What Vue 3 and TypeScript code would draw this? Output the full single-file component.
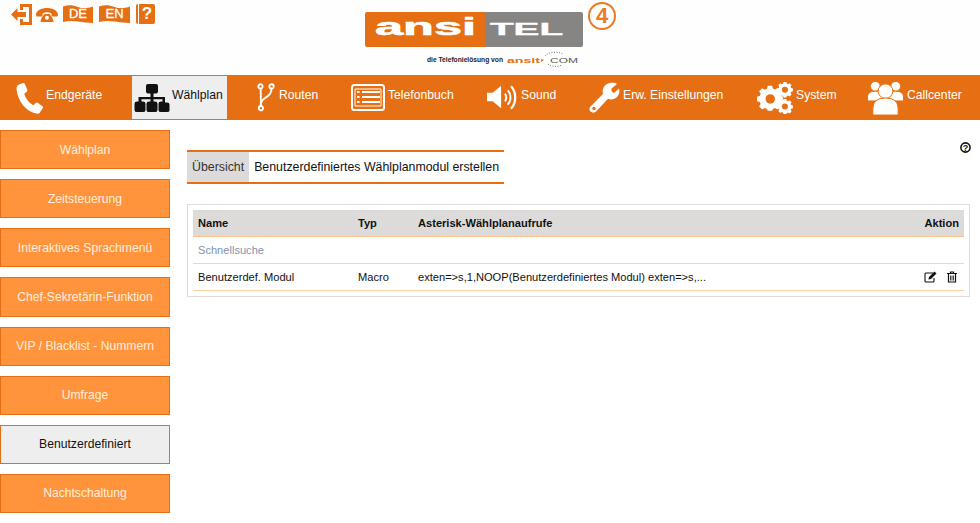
<template>
  <div class="page">
    <header class="top">
      <div class="quick">
        <!-- Abmelden -->
        <svg class="q-exit" width="21" height="21" viewBox="0 0 21 21">
          <path d="M9 0h12v21H9v-6h3v3h6V3h-6v3H9z" fill="#e66f14" />
          <path d="M0 10.500l6.500-6.500v4H15v5H6.500v4z" fill="#e66f14" />
        </svg>
        <!-- Telefon -->
        <svg class="q-phone" width="22" height="14" viewBox="0 0 22 14">
          <path d="M0 6C1 2 6 0 11 0s10 2 11 6c0 2-.5 2.500-1.500 2.500h-3.500c-1 0-1.500-.5-1.500-1.500V5.500C14 4.700 12.500 4.300 11 4.300s-3 .4-4.500 1.200V7c0 1-.5 1.500-1.500 1.500H1.500C.5 8.500 0 8 0 6z" fill="#e66f14" />
          <path d="M4.500 14c0-3 2-6 4-8h5c2 2 4 5 4 8z" fill="#e66f14" />
          <circle cx="11" cy="9.800" r="2" fill="#fff" />
        </svg>
        <span class="flag">
          <svg width="30" height="18" viewBox="0 0 33 19" preserveAspectRatio="none"><path d="M0 1.500c6-2 11-1.500 16.500.5S27 3.500 33 1.500V19c-6 0-11-.5-16.500-1.500S6 16.500 0 18z" fill="#e66f14" /></svg>
          <b>DE</b>
        </span>
        <span class="flag en">
          <svg width="31" height="18" viewBox="0 0 33 19" preserveAspectRatio="none"><path d="M0 1.500c6-2 11-1.500 16.500.5S27 3.500 33 1.500V19c-6 0-11-.5-16.500-1.500S6 16.500 0 18z" fill="#e66f14" /></svg>
          <b>EN</b>
        </span>
        <span class="help-book"><b>?</b></span>
      </div>
      <div class="brand">
        <svg width="218" height="56" viewBox="0 0 218 56">
          <path d="M2 0h118v35H2q-2 0-2-2V2q0-2 2-2z" fill="#e66f14" />
          <path d="M120 0h96q2 0 2 2v31q0 2-2 2h-96z" fill="#868584" />
          <text x="10" y="23" class="logo-a" textLength="101" lengthAdjust="spacingAndGlyphs">ansi</text>
          <text x="125" y="23" class="logo-t" textLength="73" lengthAdjust="spacingAndGlyphs">TEL</text>
          <text x="62" y="50" class="logo-s" textLength="76" lengthAdjust="spacingAndGlyphs">die Telefonielösung von</text>
          <text x="142" y="50.500" class="logo-c" textLength="33" lengthAdjust="spacingAndGlyphs">ansit</text>
          <text x="185" y="50.500" class="logo-g" textLength="28" lengthAdjust="spacingAndGlyphs">COM</text>
          <path d="M180 44c3-4 12-5 18-2M183 52c4 3 9 3 14 1" fill="none" stroke="#777" stroke-width="1" stroke-dasharray="1 1.500" />
          <path d="M176 47l3 1-3 2z" fill="#e66f14" />
        </svg>
        <div class="version">4</div>
      </div>
    </header>

    <nav class="nav">
      <a class="nav-item">
        <svg width="27" height="34" viewBox="0 0 28 34">
          <path d="M2 3.500 7 1.500c1-.4 1.800 0 2.200 1l2.500 6c.3.800 0 1.400-.6 2L8.500 12.500c1.500 5 5 9.500 9.500 12l2.400-2.300c.7-.6 1.400-.7 2.100-.3l4.700 3.300c.8.600 1 1.400.5 2.200l-2.700 4.300c-.8 1.200-2 1.800-3.500 1.500C10 31 2.500 21 .7 9c-.3-2.500 0-4.500 1.300-5.500z" fill="#fff" />
        </svg>
        <span>Endgeräte</span>
      </a>
      <a class="nav-item active">
        <svg width="36" height="30" viewBox="0 0 36 34" preserveAspectRatio="none">
          <path d="M14 1h8q2 0 2 2v7q0 2-2 2h-2.500v4H31v6h2q2.500 0 2.500 2.500v7Q35.500 33 33 33h-6q-2.500 0-2.500-2.500v-7q0-2.500 2.500-2.500h1.500v-2.500h-9V21h1.500q2.500 0 2.500 2.500v7Q23.500 33 21 33h-6q-2.500 0-2.500-2.500v-7Q12.500 21 15 21h1.500v-2.500h-9V21H9q2.500 0 2.500 2.500v7Q11.500 33 9 33H3q-2.500 0-2.500-2.500v-7Q.5 21 3 21h1.500v-5h12v-4H14q-2 0-2-2V3q0-2 2-2z" fill="#111" />
        </svg>
        <span>Wählplan</span>
      </a>
      <a class="nav-item">
        <svg width="20" height="29" viewBox="0 0 20 34" fill="none" stroke="#fff" stroke-width="2.200">
          <circle cx="3.500" cy="4" r="2.500" />
          <circle cx="16.500" cy="4" r="2.500" />
          <circle cx="4" cy="29.500" r="2.500" />
          <path d="M3.800 6.500 4 27M16.500 6.500c0 4-1 6-4 8.500-3.500 3-8 4-8.500 9" />
        </svg>
        <span>Routen</span>
      </a>
      <a class="nav-item">
        <svg width="34" height="27" viewBox="0 0 34 27">
          <rect x="1" y="1" width="32" height="25" rx="2.500" fill="#e66f14" stroke="#fff" stroke-width="2" />
          <path d="M6 8h2.500M6 13h2.500M6 18h2.500M11 8h18M11 13h18M11 18h18" stroke="#fff" stroke-width="2.200" />
          <path d="M4 5h26v17H4z" fill="none" stroke="#fff" stroke-width="1" />
        </svg>
        <span>Telefonbuch</span>
      </a>
      <a class="nav-item">
        <svg width="31" height="27" viewBox="0 0 33 28" fill="none" stroke="#fff">
          <path d="M0 9h6l9-7.500v24L6 18H0z" fill="#fff" stroke="none" />
          <path d="M19 10c2 2 2 6 0 8" stroke-width="2" />
          <path d="M22 6.500c4 4 4 11 0 15" stroke-width="2" />
          <path d="M25.500 2c6 6 6 18 0 24" stroke-width="2.400" />
        </svg>
        <span>Sound</span>
      </a>
      <a class="nav-item">
        <svg width="31" height="31" viewBox="0 0 31 31">
          <path d="M21 1c3-.6 5.500 0 7 1l-5.500 4.500c-.5 2 .5 4 2.500 4.500L30 6.500c1 3 .3 6-2 8.500-2.500 2.500-6 3-9 1.800L7 29.500c-1.500 1.500-4 1.500-5.500 0s-1.500-3.500 0-5L14 12c-1-3.500 0-6.500 2-8.500C17.500 2 19 1.300 21 1z" fill="#fff" />
          <circle cx="5" cy="26.500" r="1.700" fill="#e66f14" />
        </svg>
        <span>Erw. Einstellungen</span>
      </a>
      <a class="nav-item">
        <svg width="36" height="34" viewBox="0 0 38 34">
          <g fill="#fff">
            <path d="M12 7h5l.8 3.200 2.400 1 2.900-1.700 3.500 3.500-1.700 2.900 1 2.400 3.200.8v5l-3.200.8-1 2.400 1.700 2.900-3.500 3.500-2.900-1.700-2.400 1-.8 2h-5l-.8-2-2.400-1-2.900 1.700L2.400 30.400l1.700-2.900-1-2.400L0 24.300v-5l3.100-.8 1-2.400-1.700-2.900 3.500-3.500 2.900 1.700 2.400-1z" transform="translate(0 -2.500) scale(.94)" />
            <path d="M28 0h3l.4 1.800 1.400.6 1.600-1 2.100 2.100-1 1.600.6 1.400 1.800.4v3l-1.800.4-.6 1.400 1 1.600-2.100 2.100-1.600-1-1.400.6L31 16.500h-3l-.4-1.500-1.400-.6-1.600 1-2.100-2.100 1-1.600-.6-1.400-1.800-.4v-3l1.800-.4.6-1.400-1-1.600 2.100-2.100 1.600 1 1.400-.6z" />
            <path d="M28 18h3l.4 1.800 1.400.6 1.600-1 2.100 2.100-1 1.600.6 1.400 1.800.4v3l-1.800.4-.6 1.400 1 1.600-2.100 2.100-1.600-1-1.400.6L31 34h-3l-.4-1.500-1.400-.6-1.600 1-2.100-2.100 1-1.600-.6-1.400-1.800-.4v-3l1.800-.4.6-1.400-1-1.600 2.100-2.100 1.600 1 1.400-.6z" />
          </g>
          <circle cx="14" cy="18" r="5" fill="#e66f14" />
          <circle cx="29.500" cy="8.200" r="3.200" fill="#e66f14" />
          <circle cx="29.500" cy="26" r="3.200" fill="#e66f14" />
        </svg>
        <span>System</span>
      </a>
      <a class="nav-item">
        <svg width="37" height="36" viewBox="0 0 38 36">
          <g fill="#fff" stroke="#e66f14" stroke-width="1">
            <circle cx="8.500" cy="6" r="5" />
            <circle cx="29.500" cy="6" r="5" />
            <path d="M.5 21v-4q0-6 8-6t8 6v4z" />
            <path d="M21.500 21v-4q0-6 8-6t8 6v4z" />
            <circle cx="19" cy="11" r="7.500" />
            <path d="M6 35.500V29q0-11 13-11t13 11v6.500z" />
          </g>
        </svg>
        <span>Callcenter</span>
      </a>
    </nav>

    <div class="content">
      <aside class="side">
        <a v-for="item in sideItems" :key="item" class="side-btn" :class="{ current: item === 'Benutzerdefiniert' }">{{ item }}</a>
      </aside>
      <main class="main">
        <div class="help-line">
          <svg width="11" height="11" viewBox="0 0 11 11">
            <circle cx="5.500" cy="5.500" r="4.600" fill="none" stroke="#111" stroke-width="1.600" />
            <text x="5.500" y="8.600" class="help-q">?</text>
          </svg>
        </div>
        <div class="tabs">
          <span class="tab selected">Übersicht</span>
          <span class="tab">Benutzerdefiniertes Wählplanmodul erstellen</span>
        </div>
        <section class="panel">
          <div class="row head">
            <span>Name</span>
            <span>Typ</span>
            <span>Asterisk-Wählplanaufrufe</span>
            <span class="right">Aktion</span>
          </div>
          <div class="row search">Schnellsuche</div>
          <div class="row">
            <span>Benutzerdef. Modul</span>
            <span>Macro</span>
            <span>exten=&gt;s,1,NOOP(Benutzerdefiniertes Modul) exten=&gt;s,...</span>
            <span class="actions">
              <svg width="13" height="12" viewBox="0 0 13 12">
                <path d="M9 2H2q-1 0-1 1v7q0 1 1 1h7q1 0 1-1V7" fill="none" stroke="#111" stroke-width="1.100" />
                <path d="M10.500 .5l2 2L7 8l-2.600.6L5 6z" fill="#111" />
              </svg>
              <svg width="10" height="12" viewBox="0 0 10 12">
                <path d="M0 2.500h10M3.500 2.300V1h3v1.300" fill="none" stroke="#111" stroke-width="1.100" />
                <path d="M1.500 3v8h7V3" fill="none" stroke="#111" stroke-width="1.200" />
                <path d="M3.500 4.500V9.500M5 4.500V9.500M6.500 4.500V9.500" stroke="#111" stroke-width=".8" />
              </svg>
            </span>
          </div>
        </section>
      </main>
    </div>
  </div>
</template>

<script setup lang="ts">
/** Seitenmenü */
const sideItems: string[] = [
  'Wählplan',
  'Zeitsteuerung',
  'Interaktives Sprachmenü',
  'Chef-Sekretärin-Funktion',
  'VIP / Blacklist - Nummern',
  'Umfrage',
  'Benutzerdefiniert',
  'Nachtschaltung'
]
</script>

<style>
html,
body {
  margin: 0;
  background: #fff;
  overflow: hidden;
}
</style>

<style scoped>
.page {
  width: 980px;
  height: 523px;
  overflow: hidden;
  font-family: 'Liberation Sans', Arial, sans-serif;
  color: #111;
}

.top {
  height: 75px;
  display: flex;
  background: #fefefe;
}

.quick {
  width: 365px;
  height: 28px;
  padding: 4px 0 0 11px;
  box-sizing: border-box;
  display: flex;
  align-items: flex-start;
}

.q-phone {
  margin: 4px 0 0 4px;
}

.flag {
  position: relative;
  width: 30px;
  height: 18px;
  margin: 1px 0 0 5px;
}

.flag.en {
  width: 31px;
  margin-left: 6px;
}

.flag svg {
  display: block;
}

.flag b {
  position: absolute;
  inset: 0;
  text-align: center;
  font-size: 13px;
  font-weight: 400;
  line-height: 18px;
  color: #fff;
  -webkit-text-stroke: 0.3px #fff;
}

.help-book {
  width: 19px;
  height: 20px;
  margin-left: 6px;
  box-sizing: border-box;
  border-left: 2px solid #e66f14;
  padding-left: 1px;
  background: linear-gradient(#e66f14, #e66f14) content-box;
  border-radius: 2px;
  color: #fff;
  text-align: center;
  font-size: 17px;
  line-height: 20px;
}

.brand {
  display: flex;
  align-items: flex-start;
  padding-top: 12px;
  position: relative;
}

.brand svg {
  display: block;
}

.logo-a {
  font-size: 23px;
  font-weight: 700;
  fill: #fff;
  stroke: #fff;
  stroke-width: 0.6px;
}

.logo-t {
  font-size: 17px;
  font-weight: 700;
  fill: #fff;
  stroke: #fff;
  stroke-width: 0.4px;
}

.logo-s {
  font-size: 7px;
  font-weight: 700;
  fill: #222;
}

.logo-c {
  font-size: 8px;
  font-weight: 700;
  fill: #e66f14;
}

.logo-g {
  font-size: 7px;
  fill: #555;
}

.version {
  position: absolute;
  left: 223px;
  top: 2px;
  width: 28px;
  height: 28px;
  box-sizing: border-box;
  border: 2px solid #ea7a25;
  border-radius: 50%;
  color: #ea7a25;
  font-size: 22px;
  font-weight: 700;
  line-height: 24px;
  text-align: center;
}

.nav {
  height: 45px;
  background: #e66f14;
  display: grid;
  grid-template-columns: 118px 122px 95px 136px 102px 168px 110px auto;
  padding-left: 16px;
  box-sizing: border-box;
  align-items: center;
}

.nav-item {
  display: flex;
  align-items: center;
  gap: 3px;
  color: #fff;
  font-size: 12.200px;
  height: 45px;
  justify-self: start;
}

.nav-item span {
  padding-bottom: 6px;
}

.nav-item.active {
  margin-left: -2px;
  height: 43px;
  padding: 0 4px 0 2px;
  gap: 2px;
  background: #eee;
  color: #111;
}

.content {
  display: flex;
  padding-top: 10px;
}

.side {
  width: 170px;
  display: flex;
  flex-direction: column;
  gap: 10px;
  flex-shrink: 0;
}

.side-btn {
  height: 39.140px;
  box-sizing: border-box;
  border: 1px solid #e66f14;
  background: #ff943d;
  color: #ffeede;
  font-size: 12.150px;
  display: flex;
  align-items: center;
  justify-content: center;
}

.side-btn.current {
  background: #eee;
  color: #111;
}

.main {
  flex: 1;
  padding: 0 10px 0 17px;
}

.help-line {
  height: 20px;
  display: flex;
  justify-content: flex-end;
  padding-top: 12px;
  margin-right: -1px;
  box-sizing: border-box;
}

.help-line svg {
  display: block;
}

.help-q {
  font-size: 9px;
  font-weight: 700;
  text-anchor: middle;
  fill: #111;
}

.tabs {
  width: 317px;
  height: 34px;
  box-sizing: border-box;
  border-top: 2px solid #e66f14;
  border-bottom: 2px solid #e66f14;
  display: flex;
  font-size: 12.350px;
}

.tab {
  padding: 0 5px;
  line-height: 30px;
  white-space: nowrap;
}

.tab.selected {
  background: #dddbd9;
  color: #333;
}

.panel {
  margin-top: 20px;
  border: 1px solid #ddd;
  padding: 5px;
  height: 93px;
  box-sizing: border-box;
}

.row {
  display: grid;
  grid-template-columns: 160px 60px 1fr 60px;
  align-items: center;
  height: 27px;
  padding: 0 5px;
  box-sizing: border-box;
  border-bottom: 1px solid #ffd2a8;
  font-size: 11.100px;
}

.row.head {
  background: #dddbd9;
  font-weight: 700;
  border-bottom-color: #ffc28c;
}

.row.search {
  display: block;
  line-height: 26px;
  color: #7f93ad;
}

.right {
  text-align: right;
}

.actions {
  display: flex;
  justify-content: flex-end;
  gap: 10px;
  padding-right: 2px;
}

.actions svg {
  display: block;
}
</style>
